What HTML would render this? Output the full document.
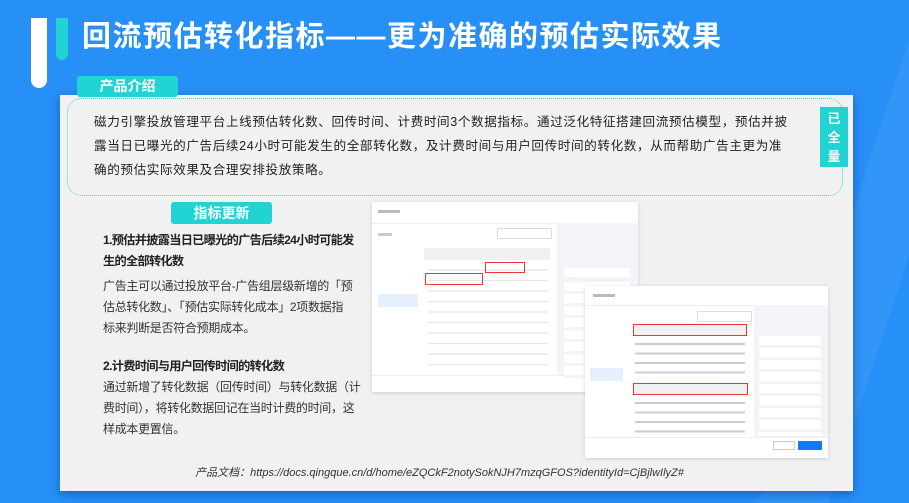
<!DOCTYPE html>
<html><head><meta charset="utf-8"><style>
*{margin:0;padding:0;box-sizing:border-box}
body{width:909px;height:503px;overflow:hidden;background:#2690f7;font-family:"Liberation Sans","Noto Sans CJK SC",sans-serif;position:relative}
.abs{position:absolute}
.title{left:82px;top:13px;color:#fff;font-size:29px;font-weight:bold;letter-spacing:1.5px;white-space:nowrap}
.card{left:60px;top:95px;width:793px;height:396px;background:#f1f1f1;box-shadow:0 3px 10px rgba(0,0,60,.35)}
.tab{background:#22d3d3;color:#fff;font-weight:bold;font-size:14px;text-align:center;border-radius:3px}
.p{font-size:12.6px;color:#222;line-height:24px;white-space:nowrap;letter-spacing:.6px}
.l{font-size:12px;color:#333;line-height:21px;white-space:nowrap;letter-spacing:-.3px}
.b{font-weight:bold;color:#222;font-size:12.2px;letter-spacing:-.7px}
.dlg{background:#fff;box-shadow:0 1px 4px rgba(0,0,0,.15);font-size:5px;color:#666}
.ln{position:absolute;height:3px;background:#bbb}
.red{position:absolute;border:1.5px solid #e33}
</style></head><body>
<div class="abs" style="left:840px;top:0;width:70px;height:503px;background:#4aa2f8;opacity:.35;transform:skewX(-18deg)"></div>
<div class="abs" style="left:31px;top:18px;width:16px;height:70px;background:#fff;border-radius:0 0 8px 8px"></div>
<div class="abs" style="left:56px;top:18px;width:12px;height:42px;background:#22d3d3;border-radius:0 0 6px 6px"></div>
<div class="abs title">回流预估转化指标——更为准确的预估实际效果</div>
<div class="abs card"></div>
<div class="abs" style="left:67px;top:98px;width:776px;height:98px;border:1.5px dotted #3cd6d6;border-radius:14px"></div>
<div class="abs tab" style="left:77px;top:76px;width:101px;height:21px;line-height:21px">产品介绍</div>
<div class="abs" style="left:820px;top:107px;width:28px;height:60px;background:#22d3d3;color:#fff;font-weight:bold;font-size:13px;text-align:center;line-height:19px;padding-top:2px">已<br>全<br>量</div>
<div class="abs p" style="left:94px;top:110px">磁力引擎投放管理平台上线预估转化数、回传时间、计费时间3个数据指标。通过泛化特征搭建回流预估模型，预估并披<br>露当日已曝光的广告后续24小时可能发生的全部转化数，及计费时间与用户回传时间的转化数，从而帮助广告主更为准<br>确的预估实际效果及合理安排投放策略。</div>
<div class="abs tab" style="left:171px;top:202px;width:101px;height:22px;line-height:22px">指标更新</div>
<div class="abs l" style="left:103px;top:230px">
<div class="b">1.预估并披露当日已曝光的广告后续24小时可能发<br>生的全部转化数</div>
<div style="margin-top:4px">广告主可以通过投放平台-广告组层级新增的「预<br>估总转化数」、「预估实际转化成本」2项数据指<br>标来判断是否符合预期成本。</div>
<div class="b" style="margin-top:17px">2.计费时间与用户回传时间的转化数</div>
<div>通过新增了转化数据（回传时间）与转化数据（计<br>费时间），将转化数据回记在当时计费的时间，这<br>样成本更置信。</div>
</div>
<div class="abs" style="left:-15px;top:464px;width:909px;text-align:center;font-size:11px;font-style:italic;color:#333">产品文档：https://docs.qingque.cn/d/home/eZQCkF2notySokNJH7mzqGFOS?identityId=CjBjlwIlyZ#</div>
<!-- dialog 1 -->
<div class="abs dlg" style="left:372px;top:202px;width:266px;height:190px">
<div class="ln" style="left:6px;top:8px;width:22px"></div>
<div class="abs" style="left:0;top:21px;width:266px;height:1px;background:#eee"></div>
<div class="abs" style="left:185px;top:21px;width:81px;height:152px;background:#f2f4f7"></div>
<div class="ln" style="left:6px;top:31px;width:14px;background:#ccc"></div>
<div class="abs" style="left:125px;top:26px;width:55px;height:11px;border:1px solid #ddd"></div>
<div class="abs" style="left:6px;top:92px;width:40px;height:13px;background:#e6f0fd"></div>
<div class="abs" style="left:52px;top:46px;width:126px;height:12px;background:#eef0f3"></div>
<div class="abs" style="left:0;top:173px;width:266px;height:1px;background:#eee"></div>
<div class="abs" style="left:56px;top:62px;width:120px;height:110px;background:repeating-linear-gradient(#fff 0 5px,#fff 5px,#ddd 6px,#fff 7px,#fff 10.5px)"></div>
<div class="red" style="left:113px;top:60px;width:40px;height:11px"></div>
<div class="red" style="left:53px;top:71px;width:58px;height:12px"></div>
<div class="abs" style="left:192px;top:66px;width:66px;height:9px;background:#fff"></div>
<div class="abs" style="left:192px;top:80px;width:66px;height:100px;background:repeating-linear-gradient(#fff 0 9px,#f2f4f7 9px 12px)"></div>
</div>
<!-- dialog 2 -->
<div class="abs dlg" style="left:585px;top:286px;width:243px;height:172px">
<div class="ln" style="left:8px;top:8px;width:22px"></div>
<div class="abs" style="left:0;top:19px;width:243px;height:1px;background:#eee"></div>
<div class="abs" style="left:169px;top:19px;width:74px;height:132px;background:#f2f4f7"></div>
<div class="abs" style="left:112px;top:25px;width:55px;height:11px;border:1px solid #ddd"></div>
<div class="abs" style="left:5px;top:82px;width:33px;height:13px;background:#e6f0fd"></div>
<div class="red" style="left:48px;top:38px;width:114px;height:12px;background:#f0f0f0"></div>
<div class="red" style="left:48px;top:97px;width:115px;height:12px;background:#f0f0f0"></div>
<div class="abs" style="left:50px;top:53px;width:110px;height:40px;background:repeating-linear-gradient(#fff 0 4px,#ccc 4px 6px,#fff 6px 9.5px)"></div>
<div class="abs" style="left:50px;top:112px;width:110px;height:40px;background:repeating-linear-gradient(#fff 0 4px,#ccc 4px 6px,#fff 6px 9.5px)"></div>
<div class="abs" style="left:174px;top:50px;width:62px;height:100px;background:repeating-linear-gradient(#fff 0 9px,#f2f4f7 9px 12px)"></div>
<div class="abs" style="left:0;top:151px;width:243px;height:1px;background:#eee"></div>
<div class="abs" style="left:188px;top:155px;width:22px;height:9px;border:1px solid #ccc"></div>
<div class="abs" style="left:213px;top:155px;width:24px;height:9px;background:#1677ff"></div>
</div>
</body></html>
